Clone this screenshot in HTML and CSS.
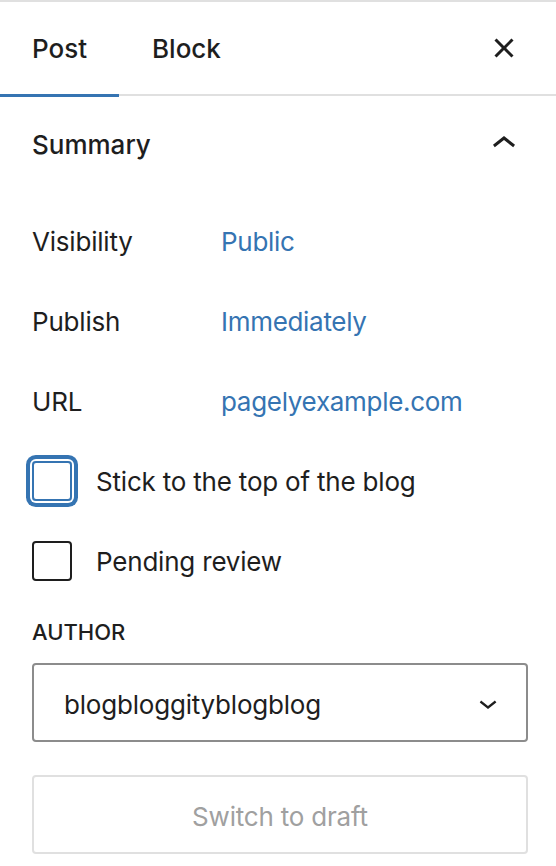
FILE: index.html
```html
<!DOCTYPE html>
<html>
<head>
<meta charset="utf-8">
<link rel="stylesheet" href="styles.css">
</head>
<body>
<div class="panel">
  <div class="tabs">
    <div class="tab active">Post</div>
    <div class="tab">Block</div>
    <button class="icon-btn close" aria-label="Close">
      <svg viewBox="0 0 24 24" width="48" height="48"><path d="M12 13.06l3.712 3.713 1.061-1.06L13.061 12l3.712-3.712-1.06-1.06L12 10.938 8.288 7.227l-1.061 1.06L10.939 12l-3.712 3.712 1.06 1.061L12 13.061z"/></svg>
    </button>
  </div>
  <div class="section-head">
    <span class="section-title">Summary</span>
    <svg class="chev-up" viewBox="0 0 24 24" width="48" height="48"><path d="M6.5 12.4L12 8l5.5 4.4-.9 1.2L12 10l-4.6 3.6-.9-1.2z"/></svg>
  </div>
  <div class="body">
    <div class="row"><span class="label">Visibility</span><span class="value">Public</span></div>
    <div class="row"><span class="label">Publish</span><span class="value">Immediately</span></div>
    <div class="row"><span class="label">URL</span><span class="value">pagelyexample.com</span></div>
    <div class="row check"><span class="box focused"></span><span>Stick to the top of the blog</span></div>
    <div class="row check"><span class="box"></span><span>Pending review</span></div>
    <div class="author-label">AUTHOR</div>
    <div class="select">
      <span class="select-text">blogbloggityblogblog</span>
      <svg viewBox="0 0 24 24" width="36" height="36"><path d="M17.5 11.6L12 16l-5.5-4.4.9-1.2L12 14l4.6-3.6 1 1.2z"/></svg>
    </div>
    <div class="draft-btn"><span>Switch to draft</span></div>
  </div>
</div>
</body>
</html>
```
FILE: styles.css
```css
* { box-sizing: border-box; }
html, body { margin: 0; padding: 0; background: #fff; }
body {
  font-family: Inter, "Noto Sans", sans-serif;
  font-size: 26px;
  color: #1e1e1e;
  letter-spacing: -0.2px;
}
.panel {
  width: 556px;
  height: 866px;
  border-top: 2px solid #e0e0e0;
  overflow: hidden;
}
.tabs {
  display: flex;
  align-items: center;
  height: 94px;
  border-bottom: 2px solid #e0e0e0;
}
.tab {
  height: 94px;
  display: flex;
  align-items: center;
  padding: 0 32px;
  font-weight: 500;
  letter-spacing: 0;
}
.tab.active {
  width: 119px;
  box-shadow: inset 0 -3px 0 #3574b2;
  margin-bottom: -2px;
  height: 96px;
  padding-bottom: 2px;
}
.tab + .tab { padding-left: 33px; }
.icon-btn {
  margin-left: auto;
  margin-right: 28px;
  border: 0;
  background: none;
  padding: 0;
  width: 48px;
  height: 48px;
  display: flex;
}
.icon-btn svg, .chev-up, .select svg { fill: #1e1e1e; display: block; }
.section-head {
  height: 96px;
  display: flex;
  align-items: center;
  justify-content: space-between;
  padding: 0 28px 0 32px;
}
.section-title { font-weight: 500; letter-spacing: 0; }
.body {
  padding: 9px 28px 0 32px;
}
.row {
  height: 80px;
  display: flex;
  align-items: center;
}
.label { width: 189px; }
.value { color: #3574b2; letter-spacing: -0.3px; }
.check { gap: 24px; }
.box {
  width: 40px;
  height: 40px;
  border: 2px solid #1e1e1e;
  border-radius: 4px;
  flex: none;
}
.box.focused {
  border-color: #3574b2;
  box-shadow: 0 0 0 2px #fff, 0 0 0 6px #3574b2;
}
.author-label {
  font-size: 22px;
  font-weight: 500;
  height: 62px;
  display: flex;
  align-items: center;
  letter-spacing: 0;
}
.select {
  height: 79px;
  border: 2px solid #8c8c8c;
  border-radius: 4px;
  display: flex;
  align-items: center;
  justify-content: space-between;
  padding: 0 20px 0 30px;
}
.select-text { padding-top: 3px; }
.draft-btn {
  margin-top: 33px;
  height: 79px;
  border: 2px solid #e0e0e0;
  border-radius: 4px;
  display: flex;
  align-items: center;
  justify-content: center;
  color: #a0a0a0;
  padding-top: 3px;
}
```
